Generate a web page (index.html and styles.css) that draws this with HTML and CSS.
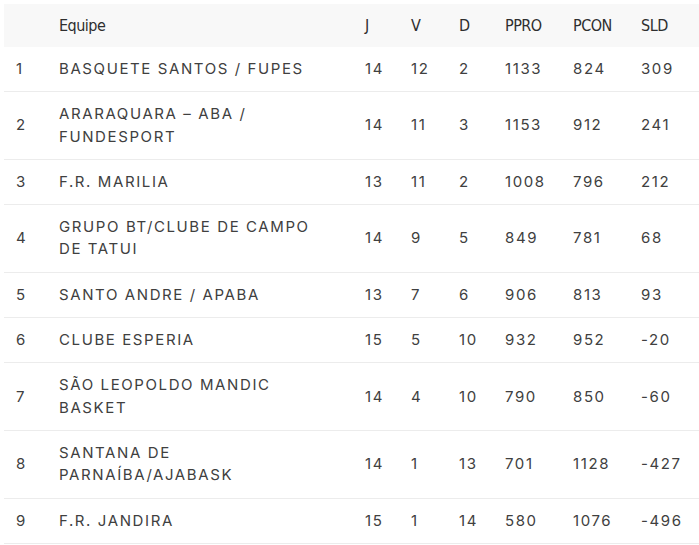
FILE: index.html
```html
<!DOCTYPE html>
<html lang="pt-BR">
<head>
<meta charset="utf-8">
<title>Classificação</title>
<link rel="stylesheet" href="styles.css">
</head>
<body>
<table class="standings">
  <colgroup>
    <col class="c-pos"><col class="c-team"><col class="c-j"><col class="c-v"><col class="c-d"><col class="c-ppro"><col class="c-pcon"><col class="c-sld">
  </colgroup>
  <thead>
    <tr><th></th><th>Equipe</th><th>J</th><th>V</th><th>D</th><th>PPRO</th><th>PCON</th><th>SLD</th></tr>
  </thead>
  <tbody>
    <tr><td>1</td><td>BASQUETE SANTOS / FUPES</td><td>14</td><td>12</td><td>2</td><td>1133</td><td>824</td><td>309</td></tr>
    <tr><td>2</td><td>ARARAQUARA – ABA /<br>FUNDESPORT</td><td>14</td><td>11</td><td>3</td><td>1153</td><td>912</td><td>241</td></tr>
    <tr><td>3</td><td>F.R. MARILIA</td><td>13</td><td>11</td><td>2</td><td>1008</td><td>796</td><td>212</td></tr>
    <tr><td>4</td><td>GRUPO BT/CLUBE DE CAMPO<br>DE TATUI</td><td>14</td><td>9</td><td>5</td><td>849</td><td>781</td><td>68</td></tr>
    <tr><td>5</td><td>SANTO ANDRE / APABA</td><td>13</td><td>7</td><td>6</td><td>906</td><td>813</td><td>93</td></tr>
    <tr><td>6</td><td>CLUBE ESPERIA</td><td>15</td><td>5</td><td>10</td><td>932</td><td>952</td><td>-20</td></tr>
    <tr><td>7</td><td>SÃO LEOPOLDO MANDIC<br>BASKET</td><td>14</td><td>4</td><td>10</td><td>790</td><td>850</td><td>-60</td></tr>
    <tr><td>8</td><td>SANTANA DE<br>PARNAÍBA/AJABASK</td><td>14</td><td>1</td><td>13</td><td>701</td><td>1128</td><td>-427</td></tr>
    <tr><td>9</td><td>F.R. JANDIRA</td><td>15</td><td>1</td><td>14</td><td>580</td><td>1076</td><td>-496</td></tr>
  </tbody>
</table>
</body>
</html>
```
FILE: styles.css
```css
html, body {
  margin: 0;
  padding: 0;
  background: #ffffff;
}
body {
  padding: 4px 0 0 4px;
}
.standings {
  width: 695px;
  border-collapse: collapse;
  table-layout: fixed;
  font-family: Inter, "DejaVu Sans", sans-serif;
  font-size: 15px;
  letter-spacing: 1.6px;
  color: #404040;
}
.c-pos { width: 43px; }
.c-team { width: 306px; }
.c-j { width: 46px; }
.c-v { width: 48px; }
.c-d { width: 46px; }
.c-ppro { width: 68px; }
.c-pcon { width: 68px; }
.c-sld { width: 70px; }

.standings th {
  background: #f8f8f8;
  font-family: "DejaVu Sans Condensed", "Liberation Sans Narrow", sans-serif;
  font-stretch: condensed;
  font-weight: normal;
  font-size: 16px;
  letter-spacing: -0.5px;
  color: #2e2e2e;
  text-align: left;
  line-height: 22px;
  padding: 11px 12px 10px;
}
.standings td {
  text-align: left;
  vertical-align: middle;
  line-height: 22.3px;
  padding: 11px 12px;
  border-bottom: 1px solid #ececec;
  white-space: nowrap;
}
```
